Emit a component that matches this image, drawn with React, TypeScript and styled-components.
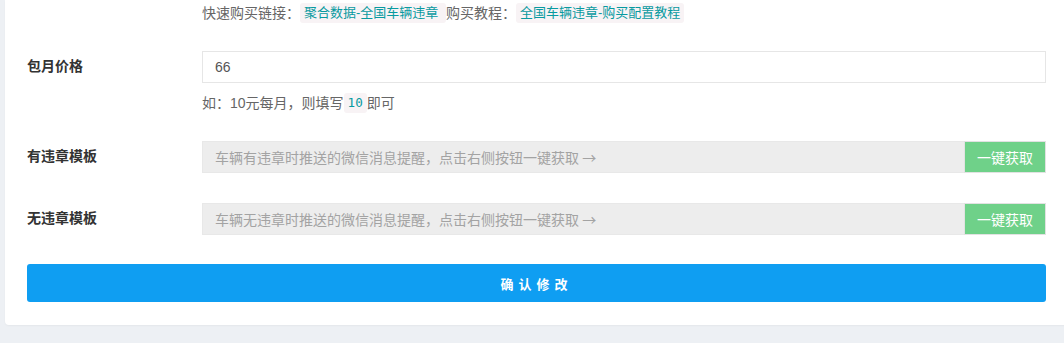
import styled, { createGlobalStyle } from 'styled-components';

const GlobalStyle = createGlobalStyle`
  html, body {
    margin: 0;
    padding: 0;
    background: #edf0f4;
    overflow: hidden;
  }
  body {
    font-family: 'Liberation Sans', 'Noto Sans CJK SC', sans-serif;
    font-size: 14px;
    color: #666;
  }
`;

const Page = styled.div`
  width: 1064px;
  height: 343px;
  padding-left: 5px;
  box-sizing: border-box;
  overflow: hidden;
`;

const Card = styled.div`
  width: 1063px;
  padding: 3px 22px 23px 22px;
  box-sizing: border-box;
  background: #fff;
  border-radius: 0 0 4px 4px;
  box-shadow: 0 1px 2px rgba(0, 0, 0, 0.04);
`;

const LinkLine = styled.div`
  margin-left: 175px;
  height: 20px;
  line-height: 20px;
  display: flex;
  align-items: center;
  white-space: pre;
`;

const Code = styled.code`
  display: inline-block;
  padding: 0 4px;
  height: 20px;
  line-height: 20px;
  border-radius: 3px;
  background: #f8f3f5;
  color: #089aa0;
  font-family: 'DejaVu Sans Mono', 'Noto Sans CJK SC', monospace;
  font-size: 12.6px;
  white-space: pre;
`;

const CodeCjk = styled(Code)`
  font-family: 'Liberation Sans', 'Noto Sans CJK SC', sans-serif;
  font-size: 13px;
`;

const FormRow = styled.div<{ $gap: number }>`
  display: grid;
  grid-template-columns: 175px 1fr;
  margin-top: ${({ $gap }) => $gap}px;
`;

const Label = styled.label`
  height: 32px;
  line-height: 30px;
  font-weight: 700;
  color: #333;
  font-size: 14px;
`;

const Field = styled.div`
  display: flex;
  flex-direction: column;
`;

const TextInput = styled.input`
  height: 32px;
  box-sizing: border-box;
  padding: 0 12px;
  border: 1px solid #e6e6e6;
  background: #fff;
  color: #555;
  font-family: 'Liberation Sans', 'Noto Sans CJK SC', sans-serif;
  font-size: 14px;
  outline: none;
`;

const Help = styled.div`
  margin-top: 10px;
  height: 20px;
  line-height: 20px;
  display: flex;
  align-items: center;
  white-space: pre;
`;

const InputGroup = styled.div`
  display: flex;
  height: 32px;
`;

const ReadonlyInput = styled.input`
  flex: 1;
  min-width: 0;
  height: 32px;
  box-sizing: border-box;
  padding: 0 12px;
  border: 1px solid #e8e8e8;
  border-right: none;
  background: #ededed;
  font-family: 'Noto Sans CJK SC', 'Liberation Sans', sans-serif;
  font-size: 14px;
  outline: none;
  &::placeholder {
    color: #a3a3a3;
  }
`;

const FetchButton = styled.button`
  width: 82px;
  height: 32px;
  box-sizing: border-box;
  border: 1px solid #e2e2e2;
  background: #6fd189;
  color: #fff;
  font-family: 'Liberation Sans', 'Noto Sans CJK SC', sans-serif;
  font-size: 14px;
  padding: 0;
  cursor: pointer;
`;

const Submit = styled.button`
  display: block;
  width: 100%;
  height: 38px;
  margin-top: 29px;
  border: none;
  border-radius: 3px;
  background: #0f9ef2;
  color: #fff;
  font-family: 'Liberation Sans', 'Noto Sans CJK SC', sans-serif;
  font-size: 13px;
  font-weight: 700;
  letter-spacing: 5px;
  cursor: pointer;
`;

const templates = [
  { label: '有违章模板', hint: '车辆有违章时推送的微信消息提醒，点击右侧按钮一键获取 →', gap: 28 },
  { label: '无违章模板', hint: '车辆无违章时推送的微信消息提醒，点击右侧按钮一键获取 →', gap: 30 },
];

export default function App() {
  return (
    <>
      <GlobalStyle />
      <Page>
        <Card>
          <LinkLine>
            快速购买链接：<CodeCjk>聚合数据-全国车辆违章 </CodeCjk>购买教程：<CodeCjk>全国车辆违章-购买配置教程</CodeCjk>
          </LinkLine>

          <FormRow $gap={28}>
            <Label>包月价格</Label>
            <Field>
              <TextInput defaultValue="66" />
              <Help>
                如：10元每月，则填写<Code>10</Code>即可
              </Help>
            </Field>
          </FormRow>

          {templates.map((t) => (
            <FormRow key={t.label} $gap={t.gap}>
              <Label>{t.label}</Label>
              <InputGroup>
                <ReadonlyInput readOnly placeholder={t.hint} />
                <FetchButton>一键获取</FetchButton>
              </InputGroup>
            </FormRow>
          ))}

          <Submit>确认修改</Submit>
        </Card>
      </Page>
    </>
  );
}
